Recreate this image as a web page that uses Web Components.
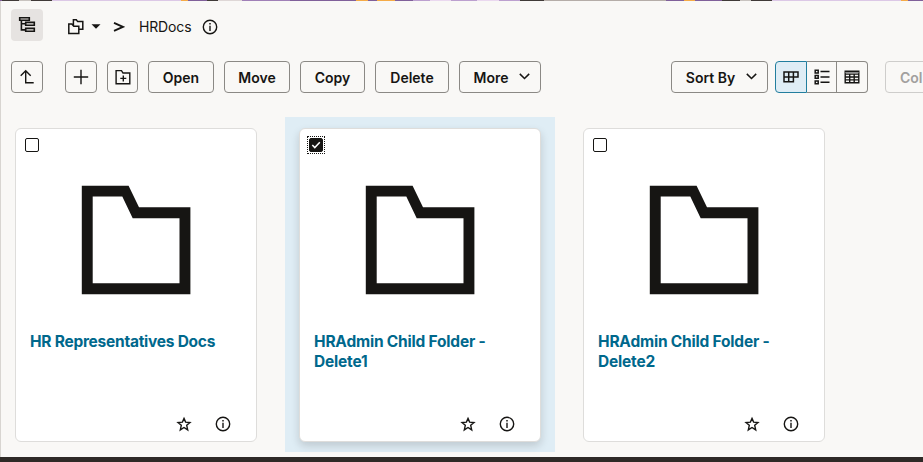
<!DOCTYPE html>
<html lang="en">
<head>
<meta charset="utf-8">
<title>HRDocs</title>
<style>
html,body{margin:0;width:923px;height:462px;overflow:hidden;background:#f9f8f6}
body{font-family:Inter,"Liberation Sans",sans-serif;color:#161513}
</style>
</head>
<body>
<doc-browser></doc-browser>
<script>
const ICONS = {
  tree: '<svg width="18" height="18" viewBox="0 0 18 18" fill="none" stroke="#161513" stroke-width="1.6"><path d="M1.7 1.7H11.3V4.3H1.7ZM7.7 6.4H16.3V9.2H7.7ZM7.7 12.4H16.3V15.3H7.7ZM3.4 4.5V13.9H7.5M3.4 7.8H7.5"/></svg>',
  folders: '<svg width="18" height="18" viewBox="0 0 18 18" fill="none" stroke="#161513" stroke-width="1.5"><path d="M6.4 5.3V1.8H9.3L10.7 3.6H15.8V11.3H12.4M1.8 15.6V5.9H4.8L6.8 8.3H11.8V15.6ZM6.4 8.1V5"/></svg>',
  caret: '<svg width="10" height="5" viewBox="0 0 10 5"><path d="M.5 .2H9.5L5 4.8Z" fill="#161513"/></svg>',
  info: '<svg width="16" height="16" viewBox="0 0 16 16" fill="none" stroke="#161513" stroke-width="1.4"><circle cx="8" cy="8" r="6.7"/><path d="M8 6.8V12"/><path d="M8 4V5.5" stroke-width="1.5"/></svg>',
  up: '<svg width="16" height="16" viewBox="0 0 16 16" fill="none" stroke="#161513" stroke-width="1.4"><path d="M1.7 6.7L6.7 1.7L11.7 6.7M6.7 2V13.7H14.7"/></svg>',
  plus: '<svg width="16" height="16" viewBox="0 0 16 16" fill="none" stroke="#161513" stroke-width="1.4"><path d="M8 .8V15.2M.8 8H15.2"/></svg>',
  newFolder: '<svg width="16" height="16" viewBox="0 0 16 16" fill="none" stroke="#161513" stroke-width="1.4"><path d="M1.1 1.6H6.5L8 4H14.8V14.7H1.1ZM8.3 6.4V12.4M5.3 9.4H11.3"/></svg>',
  chevron: '<svg width="11" height="7" viewBox="0 0 11 7" fill="none" stroke="#161513" stroke-width="1.5"><path d="M.8 .9L5.5 5.5L10.2 .9"/></svg>',
  grid: '<svg width="16" height="12" viewBox="0 0 16 12" fill="none" stroke="#161513" stroke-width="1.5"><path d="M1 1.1H15V6H10.4V10.8H1ZM1 6H10.4M5.7 1V10.8M10.4 1V6"/></svg>',
  list: '<svg width="16" height="16" viewBox="0 0 16 16" fill="none" stroke="#161513" stroke-width="1.5"><path d="M1.2 1.2H4.2V3.9H1.2ZM1.2 6.5H4.2V9.3H1.2ZM1.2 11.9H4.2V14.7H1.2ZM6.5 2.6H15.5M6.5 7.9H15.5M6.5 13.3H15.5"/></svg>',
  table: '<svg width="16" height="14" viewBox="0 0 16 14" fill="none" stroke="#161513" stroke-width="1.4"><path d="M1.2 1.2H14.8V12.8H1.2ZM1 4.1H15M1 7H15M1 9.9H15M5.7 4V13M10.2 4V13"/><path d="M1 2.7H15" stroke="#777" stroke-width="1"/></svg>',
  star: '<svg width="16" height="16" viewBox="0 0 16 16" fill="none" stroke="#161513" stroke-width="1.4"><path d="M8 2.4L9.6 6.1L14 6.5L10.7 9.3L11.7 13.9L8 11.5L4.3 13.9L5.3 9.3L2 6.5L6.4 6.1Z"/></svg>',
  folder: '<svg width="110" height="110" viewBox="0 0 110 110"><path fill="#161513" fill-rule="evenodd" d="M.8 .7H47.6L58 22.3H109.4V109.3H.8ZM11.7 11.6V98.3H98.5V33.2H51.7L41.3 11.6Z"/></svg>'
};

class UiIcon extends HTMLElement {
  connectedCallback() {
    this.attachShadow({mode:'open'}).innerHTML =
      `<style>:host{display:inline-flex;flex:none}svg{display:block}</style>${ICONS[this.getAttribute('name')]}`;
  }
}
customElements.define('ui-icon', UiIcon);

class UiButton extends HTMLElement {
  connectedCallback() {
    this.attachShadow({mode:'open'}).innerHTML = `<style>
      :host{display:flex;flex:none;box-sizing:border-box;height:32px;width:var(--w,32px);border:1px solid #8b8985;border-radius:4px;
        align-items:center;justify-content:center;gap:11px;font-weight:600;font-size:14px;line-height:20px;white-space:nowrap}
      :host([label]){padding-top:2px}
      :host([menu]){padding-left:4px}
      :host([quiet]){border-color:transparent;background:#e6e3e1}
      :host([disabled]){border-color:#cecdcb;color:#a2a09e;justify-content:flex-start;padding-left:14px}
      </style><slot></slot>`;
  }
}
customElements.define('ui-button', UiButton);

class ViewSwitch extends HTMLElement {
  connectedCallback() {
    this.attachShadow({mode:'open'}).innerHTML = `<style>
      :host{display:flex;flex:none;width:93px;height:32px}
      div{box-sizing:border-box;display:flex;align-items:center;justify-content:center;border:1px solid #8b8985;height:32px}
      .a{width:32px;border-color:#227e9e;background:#dfedf5;border-radius:4px 0 0 4px}
      .b{width:30px;border-left:0}
      .c{width:31px;border-left:0;border-radius:0 4px 4px 0}
      </style><div class="a"><ui-icon name="grid"></ui-icon></div><div class="b"><ui-icon name="list"></ui-icon></div><div class="c"><ui-icon name="table"></ui-icon></div>`;
  }
}
customElements.define('view-switch', ViewSwitch);

class CheckBox extends HTMLElement {
  connectedCallback() {
    const on = this.hasAttribute('checked');
    this.attachShadow({mode:'open'}).innerHTML = `<style>
      :host{display:block;position:relative;box-sizing:border-box;width:14px;height:14px;border:1px solid #161513;border-radius:2px;background:#fff}
      :host([checked]){background:#161513}
      :host([checked])::after{content:"";position:absolute;inset:-3px;border:1px dotted #161513}
      i{position:absolute;inset:-3px;border:1px dotted #161513}
      svg{display:block}
      </style>${on ? '<svg width="12" height="12" viewBox="0 0 12 12" fill="none" stroke="#fff" stroke-width="1.5"><path d="M2.3 6L4.8 8.6L9.8 3.3"/></svg><i></i>' : ''}`;
  }
}
customElements.define('check-box', CheckBox);

class FolderCard extends HTMLElement {
  connectedCallback() {
    const on = this.hasAttribute('selected');
    this.attachShadow({mode:'open'}).innerHTML = `<style>
      :host{display:block;box-sizing:border-box;width:270px;height:335px;padding:11px 14px 10px}
      :host([selected]){background:#dfedf5}
      article{box-sizing:border-box;width:242px;height:314px;border:1px solid #dedddb;border-radius:6px;background:#fff;display:flex;flex-direction:column;padding:9px 25.3px 8.6px 9px}
      :host([selected]) article{box-shadow:0 4px 8px rgba(22,21,19,.16)}
      .pic{margin:33px 0 0 56px;height:110px}
      h3{margin:37px -12px 0 5px;height:40px;font-size:15.5px;font-weight:700;line-height:20px;color:#00688c;letter-spacing:var(--tl,-.2px)}
      footer{display:flex;justify-content:flex-end;gap:22.4px;margin-top:auto}
      </style><article><check-box ${on ? 'checked' : ''}></check-box>
      <ui-icon class="pic" name="folder"></ui-icon><h3><slot></slot></h3>
      <footer><ui-icon name="star"></ui-icon><ui-icon name="info"></ui-icon></footer></article>`;
  }
}
customElements.define('folder-card', FolderCard);

class DocBrowser extends HTMLElement {
  connectedCallback() {
    this.attachShadow({mode:'open'}).innerHTML = `<style>
      :host{display:flex;flex-direction:column;width:923px;height:462px;overflow:hidden}
      .strip{height:1px;flex:none;background:linear-gradient(90deg,#80609a 0 2px,#403a38 2px 19px,#c8c3bf 19px 31px,#403a38 31px 52px,#dcc8e6 52px 181px,#f5ab47 181px 188px,#80609a 188px 207px,#403a38 207px 218px,#ded7d6 218px 242px,#a080b7 242px 290px,#80609a 290px 356px,#f5ab47 356px 368px,#80609a 368px 377px,#f5ab47 377px 395px,#80609a 395px 413px,#bca0cf 413px 430px,#ead8ef 430px 451px,#bca0cf 451px 477px,#ead8ef 477px 499px,#bca0cf 499px 520px,#403a38 520px 544px,#b5ada8 544px 666px,#80609a 666px 684px,#f5ab47 684px 695px,#80609a 695px 722px,#403a38 722px 740px,#c8c3bf 740px 751px,#403a38 751px 772px,#dcc8e6 772px 901px,#f5ab47 901px 908px,#80609a 908px)}
      main{box-sizing:border-box;height:456px;flex:none;border-left:1px solid #d8d5d1;background:#f9f8f6;display:flex;flex-direction:column}
      .base{height:5px;background:#2e2a27}
      nav{display:flex;align-items:center;height:32px;margin:8px 0 0 10px;font-size:14px;line-height:20px}
      nav .f{margin:3px 0 0 23.5px}nav .c{margin:2px 0 0 6.5px}nav .gt{margin:4px 0 0 12px;width:12px}
      nav .n{margin:4px 0 0 14px;width:53px;letter-spacing:-.15px;white-space:nowrap}nav .i{margin:3px 0 0 10.4px}
      .bar{display:flex;gap:10px;margin:20px 0 0 10px;height:32px;width:912px;flex:none}
      .cards{display:flex;gap:14px;margin-top:24px}
      </style>
      <div class="strip"></div>
      <main>
        <nav><ui-button quiet><ui-icon name="tree"></ui-icon></ui-button>
          <ui-icon class="f" name="folders"></ui-icon><ui-icon class="c" name="caret"></ui-icon>
          <svg class="gt" width="12" height="10" viewBox="0 0 12 10" fill="none" stroke="#161513" stroke-width="1.8"><path d="M1 .9L9.9 4.9L1 8.9"/></svg>
          <span class="n">HRDocs</span><ui-icon class="i" name="info"></ui-icon></nav>
        <div class="bar">
          <ui-button style="margin-right:12px"><ui-icon name="up"></ui-icon></ui-button>
          <ui-button><ui-icon name="plus"></ui-icon></ui-button>
          <ui-button style="--w:31px"><ui-icon name="newFolder"></ui-icon></ui-button>
          <ui-button label style="--w:66px">Open</ui-button>
          <ui-button label style="--w:66px">Move</ui-button>
          <ui-button label style="--w:65px">Copy</ui-button>
          <ui-button label style="--w:74px">Delete</ui-button>
          <ui-button label menu style="--w:82px">More<ui-icon name="chevron" style="margin-bottom:3px"></ui-icon></ui-button>
          <ui-button label menu style="--w:97px;margin-left:120px">Sort By<ui-icon name="chevron" style="margin-bottom:3px"></ui-icon></ui-button>
          <view-switch style="margin-left:-3px"></view-switch>
          <ui-button label disabled style="--w:90px;margin-left:7px">Col</ui-button>
        </div>
        <div class="cards">
          <folder-card style="--tl:-.25px">HR Representatives Docs</folder-card>
          <folder-card selected>HRAdmin Child Folder - Delete1</folder-card>
          <folder-card>HRAdmin Child Folder - Delete2</folder-card>
        </div>
      </main>
      <div class="base"></div>`;
  }
}
customElements.define('doc-browser', DocBrowser);
</script>
</body>
</html>
